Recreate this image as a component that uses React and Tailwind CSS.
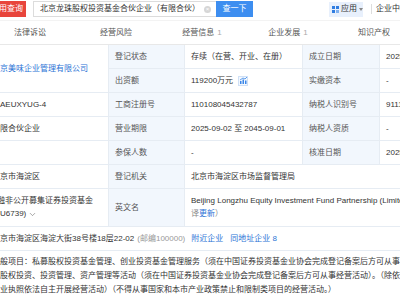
import { ChevronDown } from 'lucide-react';

const label = 'flex items-center border-b border-r border-[#e6ecf3] bg-[#f2f7fd] px-[6px] text-[#555]';
const cell = 'flex items-center border-b border-r border-[#e6ecf3] px-[6px] whitespace-nowrap';

function Tab({ name, count }) {
  return (
    <div className="flex w-[86px] shrink-0 items-center justify-center text-[#555]">
      {name}
      {count && <span className="ml-[3px] text-[#aaa]">{count}</span>}
    </div>
  );
}

export default function App() {
  return (
    <div className="h-[300px] w-[400px] overflow-hidden bg-white font-['Liberation_Sans','Noto_Sans_CJK_SC',sans-serif] text-[8px] leading-none text-[#333]">
      {/* Header */}
      <div className="flex h-[21px] items-center whitespace-nowrap border-b border-[#f3f3f3] pb-[2px]">
        <div className="flex h-[16px] w-[26px] shrink-0 items-center overflow-hidden bg-[#e8453c] text-white">
          <span className="-ml-[9px] shrink-0">信用查询</span>
        </div>
        <div className="ml-[7px] flex h-[16px] w-[183px] shrink-0 items-center border border-r-0 border-[#dcdcdc] pl-[6px] pr-[5px]">
          <span className="shrink-0">北京龙珠股权投资基金合伙企业（有限合伙）</span>
          <span className="ml-auto flex h-[7px] w-[7px] shrink-0 items-center justify-center rounded-full bg-[#d6d6d6] text-[6px] text-white">×</span>
        </div>
        <div className="flex h-[16px] w-[37px] shrink-0 items-center justify-center bg-[#3d8ef0] text-white">查一下</div>
        <div className="ml-[76px] flex h-[15px] w-[34px] shrink-0 items-center bg-[#e8f0fc] px-[3px]">
          <svg width="7" height="7" viewBox="0 0 7 7" className="shrink-0">
            <rect x="0" y="0" width="3" height="3" fill="#2f7de1" />
            <rect x="4" y="0" width="3" height="3" fill="#2f7de1" />
            <rect x="0" y="4" width="3" height="3" fill="#2f7de1" />
            <rect x="4" y="4" width="3" height="3" fill="#7fb0ef" />
          </svg>
          <span className="ml-[2px] shrink-0">应用</span>
          <svg width="4" height="3" viewBox="0 0 4 3" className="ml-[2px] shrink-0">
            <path d="M0 0 L4 0 L2 3 Z" fill="#888" />
          </svg>
        </div>
        <div className="ml-[8px] h-[10px] w-px shrink-0 bg-[#ddd]" />
        <span className="ml-[4px] shrink-0">企业中心</span>
      </div>

      {/* Tabs */}
      <div className="flex h-[24px] border-b border-[#e8e8e8]">
        <div className="-ml-[13px] flex">
          <Tab name="法律诉讼" />
          <Tab name="经营风险" />
          <Tab name="经营信息" count="1" />
          <Tab name="企业发展" count="1" />
          <Tab name="知识产权" />
        </div>
      </div>

      {/* Table */}
      <div className="-ml-[6px] grid w-[506px] grid-cols-[115px_76px_118px_77px_120px] grid-rows-[24px_24px_24px_24px_24px_24px_38px_24px_auto]">
        <div className={`${cell} row-span-2 text-[#2d74d6]`}>京美味企业管理有限公司</div>
        <div className={label}>登记状态</div>
        <div className={cell}>存续（在营、开业、在册）</div>
        <div className={label}>成立日期</div>
        <div className={cell}>2025-09-02</div>

        <div className={label}>出资额</div>
        <div className={cell}>
          119200万元
          <span className="ml-[5px] flex h-[10px] w-[10px] items-center justify-center border border-[#cfe0f6] bg-[#f3f8fe]">
            <svg width="7" height="7" viewBox="0 0 7 7" fill="#3a86e8">
              <rect x="0" y="4" width="1.5" height="3" />
              <rect x="2.5" y="2.5" width="1.5" height="4.5" />
              <rect x="5" y="3.5" width="1.5" height="3.5" />
              <path d="M0 3 L3 1 L5 2 L7 0" stroke="#3a86e8" strokeWidth="0.8" fill="none" />
            </svg>
          </span>
        </div>
        <div className={label}>实缴资本</div>
        <div className={cell}>-</div>

        <div className={cell}>AEUXYUG-4</div>
        <div className={label}>工商注册号</div>
        <div className={cell}>110108045432787</div>
        <div className={label}>纳税人识别号</div>
        <div className={cell}>91110108MAEUXYUG4</div>

        <div className={cell}>限合伙企业</div>
        <div className={label}>营业期限</div>
        <div className={cell}>2025-09-02 至 2045-09-01</div>
        <div className={label}>纳税人资质</div>
        <div className={cell}>-</div>

        <div className={cell}></div>
        <div className={label}>参保人数</div>
        <div className={cell}>-</div>
        <div className={label}>核准日期</div>
        <div className={cell}>2025-09-02</div>

        <div className={cell}>京市海淀区</div>
        <div className={label}>登记机关</div>
        <div className={`${cell} col-span-3`}>北京市海淀区市场监督管理局</div>

        <div className="flex flex-col justify-center gap-[5px] border-b border-r border-[#e6ecf3] px-[6px] whitespace-nowrap">
          <span className="-ml-[3px]">融非公开募集证券投资基金</span>
          <span className="flex items-center">
            U6739)
            <ChevronDown size={9} strokeWidth={1.5} className="ml-[2px] text-[#666]" />
          </span>
        </div>
        <div className={label}>英文名</div>
        <div className="col-span-3 flex flex-col justify-center gap-[5px] border-b border-[#e6ecf3] px-[6px] whitespace-nowrap">
          <span>Beijing Longzhu Equity Investment Fund Partnership (Limited Partnership)</span>
          <span>
            <span className="text-[#888]">译</span>
            <span className="text-[#2d74d6]">更新</span>
            <span className="text-[#888]">）</span>
          </span>
        </div>

        <div className={`${cell} col-span-5`}>
          京市海淀区海淀大街38号楼18层22-02
          <span className="ml-[3px] text-[#999]">(邮编100000)</span>
          <span className="ml-[6px] text-[#2d74d6]">附近企业</span>
          <span className="ml-[7px] text-[#2d74d6]">同地址企业 8</span>
        </div>

        <div className="col-span-5 flex flex-col whitespace-nowrap px-[6px] pt-[4px] leading-[14px]">
          <span>般项目：私募股权投资基金管理、创业投资基金管理服务（须在中国证券投资基金业协会完成登记备案后方可从事经营活动）</span>
          <span>股权投资、投资管理、资产管理等活动（须在中国证券投资基金业协会完成登记备案后方可从事经营活动）。（除依法须经批准的项目外</span>
          <span>业执照依法自主开展经营活动）（不得从事国家和本市产业政策禁止和限制类项目的经营活动。）</span>
        </div>
      </div>
    </div>
  );
}
